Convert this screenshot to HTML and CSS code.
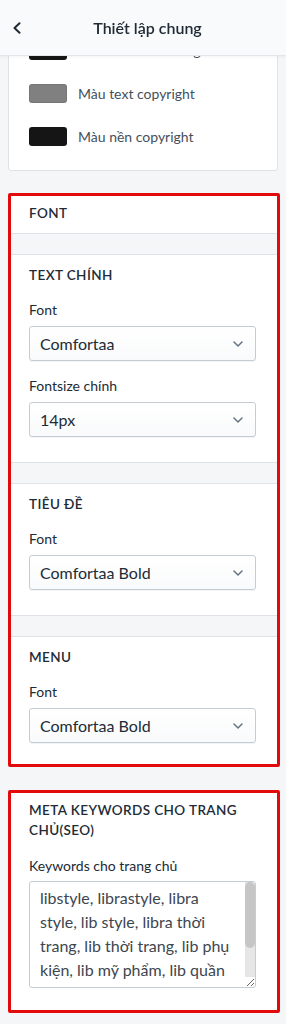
FILE: index.html
```html
<!DOCTYPE html>
<html lang="vi">
<head>
<meta charset="utf-8">
<title>Thiết lập chung</title>
<link rel="stylesheet" href="styles.css">
</head>
<body>
<header class="topbar">
  <button class="back-btn" type="button" aria-label="Quay lại">
    <svg width="10" height="12" viewBox="0 0 10 12" aria-hidden="true"><path d="M7.5 1.2 L2.5 6 L7.5 10.8" fill="none" stroke="#212b36" stroke-width="2" stroke-linecap="round" stroke-linejoin="round"/></svg>
  </button>
  <h1 class="topbar-title">Thiết lập chung</h1>
  <span class="topbar-spacer"></span>
</header>

<main class="page">
  <section class="card color-card">
    <div class="color-row"><span class="swatch swatch-black"></span><span class="color-label">Màu chữ chân trang</span></div>
    <div class="color-row"><span class="swatch swatch-grey"></span><span class="color-label">Màu text copyright</span></div>
    <div class="color-row"><span class="swatch swatch-black"></span><span class="color-label">Màu nền copyright</span></div>
  </section>

  <section class="card marked">
    <div class="card-header"><h2 class="subheading">Font</h2></div>
    <div class="card-gap"></div>
    <div class="card-section">
      <h3 class="subheading">Text chính</h3>
      <div class="field">
        <label class="field-label">Font</label>
        <div class="select"><span>Comfortaa</span><svg class="chev" width="10" height="6" viewBox="0 0 10 6" aria-hidden="true"><path d="M1 1 L5 5 L9 1" fill="none" stroke="#637381" stroke-width="1.5" stroke-linecap="round" stroke-linejoin="round"/></svg></div>
      </div>
      <div class="field">
        <label class="field-label">Fontsize chính</label>
        <div class="select"><span>14px</span><svg class="chev" width="10" height="6" viewBox="0 0 10 6" aria-hidden="true"><path d="M1 1 L5 5 L9 1" fill="none" stroke="#637381" stroke-width="1.5" stroke-linecap="round" stroke-linejoin="round"/></svg></div>
      </div>
    </div>
    <div class="card-gap"></div>
    <div class="card-section">
      <h3 class="subheading">Tiêu đề</h3>
      <div class="field">
        <label class="field-label">Font</label>
        <div class="select"><span>Comfortaa Bold</span><svg class="chev" width="10" height="6" viewBox="0 0 10 6" aria-hidden="true"><path d="M1 1 L5 5 L9 1" fill="none" stroke="#637381" stroke-width="1.5" stroke-linecap="round" stroke-linejoin="round"/></svg></div>
      </div>
    </div>
    <div class="card-gap"></div>
    <div class="card-section last">
      <h3 class="subheading">Menu</h3>
      <div class="field">
        <label class="field-label">Font</label>
        <div class="select"><span>Comfortaa Bold</span><svg class="chev" width="10" height="6" viewBox="0 0 10 6" aria-hidden="true"><path d="M1 1 L5 5 L9 1" fill="none" stroke="#637381" stroke-width="1.5" stroke-linecap="round" stroke-linejoin="round"/></svg></div>
      </div>
    </div>
  </section>

  <section class="card marked meta">
    <h2 class="subheading">Meta keywords cho trang chủ(SEO)</h2>
    <div class="field meta-field">
      <label class="field-label" for="kw">Keywords cho trang chủ</label>
      <div class="textarea-wrap">
        <textarea id="kw" class="textarea" wrap="off">libstyle, librastyle, libra
style, lib style, libra thời
trang, lib thời trang, lib phụ
kiện, lib mỹ phẩm, lib quần
áo, lib giày dép, lib túi xách,
libra phụ kiện, libra mỹ phẩm</textarea>
        <span class="scrollbar" aria-hidden="true"><span class="scrollbar-thumb"></span></span>
      </div>
    </div>
  </section>

  <section class="card next-card"></section>
</main>
</body>
</html>
```

FILE: styles.css
```css
* { box-sizing: border-box; }

body {
  margin: 0;
  width: 286px;
  background: #f4f6f8;
  font-family: Lato, "Liberation Sans", sans-serif;
  color: #212b36;
}

.topbar {
  position: fixed;
  top: 0;
  left: 0;
  width: 286px;
  height: 55px;
  display: grid;
  grid-template-columns: 36px 1fr 27px;
  align-items: center;
  background: #f9fafb;
  box-shadow: 0 1px 0 #e3e6e9, 0 1px 3px rgba(33, 43, 54, 0.1);
  z-index: 10;
}

.back-btn {
  border: 0;
  background: none;
  padding: 0 0 0 12px;
  height: 55px;
  display: flex;
  align-items: center;
  cursor: pointer;
}

.topbar-title {
  margin: 0;
  text-align: center;
  font-size: 16px;
  line-height: 20px;
  font-weight: 600;
  color: #212b36;
}

.page {
  display: flex;
  flex-direction: column;
  padding-top: 20px;
  padding-bottom: 40px;
}

.card {
  background: #fff;
  margin: 0 8px;
  border: 1px solid #dfe3e8;
  border-radius: 3px;
}

.color-card {
  display: flex;
  flex-direction: column;
  gap: 24px;
  padding: 20px 20px 24px;
}

.color-row {
  display: flex;
  align-items: center;
  gap: 11px;
  height: 19px;
}

.swatch {
  flex: none;
  width: 38px;
  height: 19px;
  border-radius: 3px;
}

.swatch-black { background: #151515; }
.swatch-grey { background: #808080; box-shadow: inset 0 0 0 1px rgba(0,0,0,0.08); }

.color-label {
  font-size: 14px;
  line-height: 20px;
  color: #454f5b;
}

.marked {
  margin: 22px 6px 0 8px;
  border: 3px solid #e20a0a;
  border-radius: 2px;
}

.card-header {
  padding: 7px 21px 10px 18px;
  border-bottom: 1px solid #dfe3e8;
}

.subheading {
  margin: 0;
  font-size: 13.5px;
  line-height: 20px;
  font-weight: 600;
  text-transform: uppercase;
  letter-spacing: 0.03em;
  color: #212b36;
}

.card-gap {
  height: 21px;
  background: #f4f6f8;
  border-bottom: 1px solid #dfe3e8;
}

.card-section {
  padding: 10px 21px 25px 18px;
  border-bottom: 1px solid #dfe3e8;
}

.card-section.last {
  border-bottom: 0;
  padding-bottom: 21px;
}

.field { margin-top: 15px; }

.field-label {
  display: block;
  font-size: 14px;
  line-height: 20px;
  margin-bottom: 6px;
  color: #212b36;
}

.select {
  height: 35px;
  display: flex;
  align-items: center;
  justify-content: space-between;
  padding: 0 12px 0 10px;
  border: 1px solid #c4cdd5;
  border-radius: 3px;
  background: linear-gradient(#ffffff, #f9fafb);
  box-shadow: 0 1px 0 rgba(22, 29, 37, 0.05);
  font-size: 16px;
  color: #212b36;
}

.chev { flex: none; }

.meta {
  margin-top: 23px;
  padding: 7px 21px 22px 18px;
}

.meta-field { margin-top: 16px; }
.meta-field .field-label { margin-bottom: 5px; }

.textarea-wrap { position: relative; }

.textarea {
  display: block;
  width: 100%;
  height: 107px;
  margin: 0;
  padding: 4px 12px 4px 10px;
  border: 1px solid #c4cdd5;
  border-radius: 3px;
  font-family: Lato, "Liberation Sans", sans-serif;
  font-size: 16px;
  line-height: 24px;
  color: #3d4650;
  background: #fff;
  white-space: pre;
  resize: vertical;
  overflow: hidden;
}

.scrollbar {
  position: absolute;
  top: 1px;
  right: 1px;
  bottom: 11px;
  width: 10px;
  background: #e6e6e6;
  border-top-right-radius: 2px;
}

.scrollbar-thumb {
  display: block;
  height: 66px;
  border-radius: 5px;
  background: #c6c6c6;
}

.next-card {
  margin-top: 11px;
  height: 60px;
}
```
